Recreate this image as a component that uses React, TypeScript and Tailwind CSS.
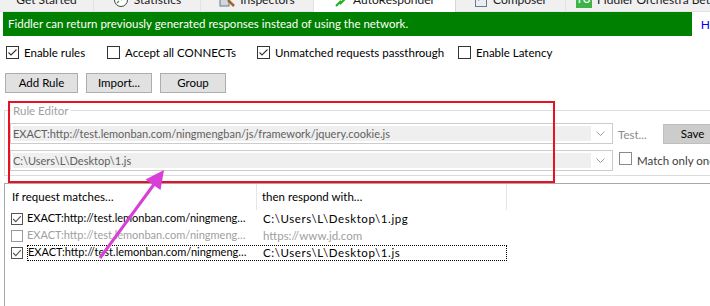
import React from "react";

function Check({ checked, muted }: { checked?: boolean; muted?: boolean }) {
  return (
    <span
      className={`relative inline-block w-[13px] h-[13px] shrink-0 border bg-white ${
        muted ? "border-[#8a8a8a]" : "border-[#333333]"
      }`}
    >
      {checked && (
        <svg className="absolute left-0 top-0" width="11" height="11" viewBox="0 0 11 11">
          <polyline points="1.5,5.5 4,8 9.5,2.5" fill="none" stroke="#333" strokeWidth="1.1" />
        </svg>
      )}
    </span>
  );
}

function SmallCheck({ checked, muted }: { checked?: boolean; muted?: boolean }) {
  return (
    <span
      className={`relative inline-block w-[12px] h-[12px] shrink-0 border bg-white ${
        muted ? "border-[#9a9a9a]" : "border-[#555555]"
      }`}
    >
      {checked && (
        <svg className="absolute left-0 top-0" width="10" height="10" viewBox="0 0 10 10">
          <polyline points="1.2,5 3.8,7.6 8.8,2.2" fill="none" stroke="#555" strokeWidth="1.1" />
        </svg>
      )}
    </span>
  );
}

function Combo({ text }: { text: string }) {
  return (
    <div className="flex h-[21px] w-[603px] border border-[#cccccc] bg-white p-[2px]">
      <div className="flex flex-1 items-center overflow-hidden whitespace-nowrap bg-[#efefef] pl-[0px] text-[11px] text-[#606060]">
        {text}
      </div>
      <div className="flex w-[19px] items-center justify-center">
        <svg width="9" height="6" viewBox="0 0 9 6">
          <polyline points="0.5,0.5 4.5,4.5 8.5,0.5" fill="none" stroke="#a0a0a0" strokeWidth="1" />
        </svg>
      </div>
    </div>
  );
}

function Tab({ w, label, icon, selected, sep = true }: { w: number; label: string; icon?: React.ReactNode; selected?: boolean; sep?: boolean }) {
  return (
    <div
      className={`flex h-[12px] shrink-0 justify-center overflow-hidden ${
        selected ? "bg-white" : "bg-[#f0f0f0] border-b border-[#e3e3e3]"
      } ${sep ? "border-r border-[#d6d6d6]" : ""}`}
      style={{ width: w }}
    >
      <div className="-mt-[8px] flex h-[16px] items-center gap-[5px] whitespace-nowrap text-[12px] text-[#1a1a1a] leading-[16px]">
        {icon}
        <span>{label}</span>
      </div>
    </div>
  );
}

export default function App() {
  return (
    <div className="relative h-[306px] w-[710px] overflow-hidden bg-white font-['Lato',sans-serif] text-[11.5px] text-black">
      {/* tab strip */}
      <div className="flex h-[12px] overflow-hidden">
        <Tab w={94} label="Get Started" />
        <Tab
          w={107}
          label="Statistics"
          icon={
            <svg width="16" height="16" viewBox="0 0 16 16">
              <circle cx="8" cy="8" r="6.5" fill="white" stroke="#444" strokeWidth="1" />
              <path d="M8 8 L11 5" stroke="#d33" strokeWidth="1.2" />
              <path d="M4 11 L6 9" stroke="#3a3" strokeWidth="1.2" />
            </svg>
          }
        />
        <Tab
          w={113}
          label="Inspectors"
          icon={
            <svg width="16" height="16" viewBox="0 0 16 16">
              <rect x="1" y="4" width="9" height="10" fill="#cfd8e0" stroke="#6a7a88" />
              <path d="M9 8 L15 14" stroke="#a0662a" strokeWidth="2.5" />
            </svg>
          }
        />
        <Tab
          w={142}
          selected
          label="AutoResponder"
          icon={
            <svg width="14" height="16" viewBox="0 0 14 16">
              <path d="M2 14 L7 9 L6 12 L12 6" stroke="#22b022" strokeWidth="2" fill="none" />
            </svg>
          }
        />
        <Tab
          w={110}
          label="Composer"
          icon={
            <svg width="14" height="16" viewBox="0 0 14 16">
              <rect x="1.5" y="1.5" width="11" height="13" fill="#e8eef4" stroke="#6a7a88" />
              <path d="M4 8 L10 5" stroke="#a0662a" strokeWidth="1.5" />
            </svg>
          }
        />
        <Tab
          w={160}
          sep={false}
          label="Fiddler Orchestra Beta"
          icon={
            <span className="flex h-[16px] w-[16px] items-center justify-center bg-[#3cb44a] text-[9px] font-bold text-white">FO</span>
          }
        />
      </div>

      {/* banner */}
      <div className="flex items-start">
        <div className="ml-[3px] flex h-[24px] w-[690px] items-center bg-[#008000] pl-[5px] text-white">
          Fiddler can return previously generated responses instead of using the network.
        </div>
        <span className="ml-[9px] mt-[4px] text-[12px] text-[#0000ff]">H</span>
      </div>

      {/* options */}
      <div className="mt-[10px] flex h-[13px] items-center pl-[6px]">
        <label className="flex w-[101px] items-center gap-[5px]">
          <Check checked />
          <span>Enable rules</span>
        </label>
        <label className="flex w-[150px] items-center gap-[5px]">
          <Check />
          <span>Accept all CONNECTs</span>
        </label>
        <label className="flex w-[201px] items-center gap-[5px]">
          <Check checked />
          <span>Unmatched requests passthrough</span>
        </label>
        <label className="flex items-center gap-[5px]">
          <Check />
          <span>Enable Latency</span>
        </label>
      </div>

      {/* buttons */}
      <div className="mt-[14px] flex gap-[8px] pl-[5px]">
        <button className="h-[20px] w-[73px] border border-[#adadad] bg-[#e1e1e1]">Add Rule</button>
        <button className="h-[20px] w-[66px] border border-[#adadad] bg-[#e1e1e1]">Import...</button>
        <button className="h-[20px] w-[66px] border border-[#adadad] bg-[#e1e1e1]">Group</button>
      </div>

      {/* rule editor */}
      <fieldset className="ml-[4px] mt-[9px] h-[74px] w-[730px] border border-[#dcdcdc] pl-[5px]">
        <legend className="ml-[1px] px-[2px] text-[#a0a0a0]">Rule Editor</legend>
        <div className="mt-[4px] flex items-center">
          <Combo text="EXACT:http://test.lemonban.com/ningmengban/js/framework/jquery.cookie.js" />
          <span className="ml-[5px] mt-[2px] text-[#8a8a8a]">Test...</span>
          <button className="ml-[16px] h-[20px] w-[70px] border border-[#bfbfbf] bg-[#cccccc] pl-[17px] text-left">Save</button>
        </div>
        <div className="mt-[6px] flex items-center">
          <Combo text="C:\Users\L\Desktop\1.js" />
          <span className="ml-[6px]">
            <Check muted />
          </span>
          <span className="ml-[5px] whitespace-nowrap text-[#404040]">Match only once</span>
        </div>
      </fieldset>

      {/* list view */}
      <div className="ml-[4px] mt-[7px] h-[130px] border-l border-t border-[#a8a8a8]">
        <div className="flex h-[26px] items-center">
          <div className="flex h-full w-[252px] items-center border-r border-[#e5e5e5] pl-[7px]">If request matches…</div>
          <div className="flex h-full w-[250px] items-center border-r border-[#e5e5e5] pl-[5px]">then respond with…</div>
        </div>
        <div className="flex h-[17px] items-center">
          <div className="flex w-[252px] items-center overflow-hidden pl-[6px]">
            <SmallCheck checked />
            <span className="ml-[4px] whitespace-nowrap text-[11px]">EXACT:http://test.lemonban.com/ningmeng…</span>
          </div>
          <div className="pl-[6px] whitespace-nowrap tracking-[0.6px]">C:\Users\L\Desktop\1.jpg</div>
        </div>
        <div className="flex h-[17px] items-center text-[#a0a0a0]">
          <div className="flex w-[252px] items-center overflow-hidden pl-[6px]">
            <SmallCheck muted />
            <span className="ml-[4px] whitespace-nowrap text-[11px]">EXACT:http://test.lemonban.com/ningmeng…</span>
          </div>
          <div className="pl-[6px] whitespace-nowrap">https://www.jd.com</div>
        </div>
        <div className="flex h-[17px] items-center">
          <div className="flex w-[22px] items-center pl-[6px]">
            <SmallCheck checked />
          </div>
          <div className="flex h-[16px] w-[480px] items-center border border-dotted border-black">
            <span className="w-[230px] overflow-hidden whitespace-nowrap text-[11px]">EXACT:http://test.lemonban.com/ningmeng…</span>
            <span className="pl-[5px] whitespace-nowrap tracking-[0.6px]">C:\Users\L\Desktop\1.js</span>
          </div>
        </div>
      </div>

      {/* annotations */}
      <div className="pointer-events-none absolute left-[8px] top-[101px] h-[82px] w-[547px] border-2 border-[#e81123]" />
      <svg className="pointer-events-none absolute left-0 top-0" width="710" height="306">
        <line x1="100" y1="258" x2="155" y2="183" stroke="#d93fd6" strokeWidth="3" />
        <polygon points="164,170 145.5,179.5 160.5,190" fill="#d93fd6" />
      </svg>
    </div>
  );
}
